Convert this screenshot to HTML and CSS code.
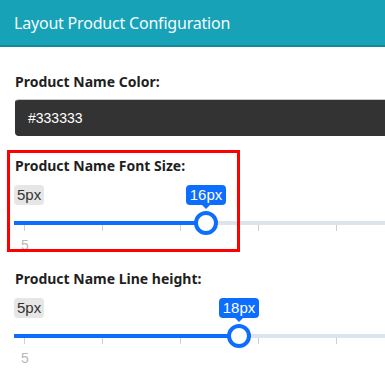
FILE: index.html
```html
<!DOCTYPE html>
<html lang="en">
<head>
    <meta charset="UTF-8">
    <meta name="viewport" content="width=device-width, initial-scale=1.0">
    <title>Layout Product Configuration</title>
    <link rel="stylesheet" href="styles.css">
</head>
<body>
    <header class="panel-header">
        <h1>Layout Product Configuration</h1>
    </header>

    <main class="panel-body">
        <div class="field">
            <label class="field-label">Product Name Color:</label>
            <div class="color-input">#333333</div>
        </div>

        <div class="field field-highlight">
            <label class="field-label">Product Name Font Size:</label>
            <div class="range">
                <div class="range-labels">
                    <span class="range-min">5px</span>
                    <span class="range-value" style="left: 172px;">16px</span>
                </div>
                <div class="range-track">
                    <div class="range-fill" style="width: 192px;"></div>
                    <div class="range-thumb" style="left: 192px;"></div>
                </div>
                <div class="range-grid">
                    <span class="tick"><em>5</em></span>
                    <span class="tick"></span>
                    <span class="tick"></span>
                    <span class="tick"></span>
                    <span class="tick"></span>
                </div>
            </div>
            <div class="highlight-box"></div>
        </div>

        <div class="field">
            <label class="field-label">Product Name Line height:</label>
            <div class="range">
                <div class="range-labels">
                    <span class="range-min">5px</span>
                    <span class="range-value" style="left: 205px;">18px</span>
                </div>
                <div class="range-track">
                    <div class="range-fill" style="width: 225px;"></div>
                    <div class="range-thumb" style="left: 225px;"></div>
                </div>
                <div class="range-grid">
                    <span class="tick"><em>5</em></span>
                    <span class="tick"></span>
                    <span class="tick"></span>
                    <span class="tick"></span>
                    <span class="tick"></span>
                </div>
            </div>
        </div>
    </main>
</body>
</html>
```

FILE: styles.css
```css
html, body {
    height: 100%;
    overflow: hidden;
}

body {
    margin: 0;
    background: #fff;
    font-family: "Noto Sans", Arial, sans-serif;
    color: #222;
}

.panel-header {
    height: 45px;
    background-color: #17a2b8;
    border-bottom: 2px solid #128a9c;
    padding-left: 14px;
    display: flex;
    align-items: center;
}

.panel-header h1 {
    margin: 0;
    font-size: 16px;
    font-weight: 400;
    color: #f4fbfc;
    letter-spacing: -0.2px;
}

.panel-body {
    padding: 25px 0 0 15px;
    overflow: hidden;
}

.field {
    position: relative;
    margin-bottom: 20px;
}

.field-label {
    display: block;
    height: 20px;
    line-height: 20px;
    font-size: 14px;
    font-weight: 700;
    color: #1f1f1f;
    margin-bottom: 7px;
}

.color-input {
    height: 35px;
    line-height: 36px;
    margin-right: -10px;
    background: #333;
    border: 1px solid #333;
    border-top-color: #c8c8c8;
    border-radius: 4px 0 0 4px;
    padding-left: 12px;
    font-family: "Liberation Sans", Arial, sans-serif;
    font-size: 14px;
    color: #fff;
}

.range {
    margin-left: -1px;
    margin-right: -10px;
    height: 64px;
    margin-top: 9px;
}

.range-labels {
    position: relative;
    height: 20px;
    font-family: "Liberation Sans", Arial, sans-serif;
    font-size: 15px;
}

.range-min {
    display: inline-block;
    height: 20px;
    line-height: 20px;
    padding: 0 3px;
    background: #e6e6e6;
    color: #333;
    border-radius: 4px;
}

.range-value {
    position: absolute;
    top: 0;
    width: 40px;
    height: 20px;
    line-height: 20px;
    text-align: center;
    background: #0d6efd;
    color: #fff;
    border-radius: 4px;
}

.range-value::after {
    content: "";
    position: absolute;
    left: 16px;
    bottom: -4px;
    border-left: 4px solid transparent;
    border-right: 4px solid transparent;
    border-top: 4px solid #0d6efd;
}

.range-track {
    position: relative;
    height: 4px;
    margin-top: 16px;
    background: #dee4ec;
}

.range-fill {
    height: 4px;
    background: #0d6efd;
}

.range-thumb {
    position: absolute;
    top: -10px;
    width: 24px;
    height: 24px;
    margin-left: -12px;
    box-sizing: border-box;
    border: 4px solid #0d6efd;
    border-radius: 50%;
    background: #fff;
}

.range-grid {
    display: flex;
    padding-left: 10px;
}

.tick {
    position: relative;
    flex: 0 0 78px;
    box-sizing: border-box;
    height: 6px;
    border-left: 1px solid #d0d0d0;
}

.tick em {
    position: absolute;
    top: 12px;
    left: -4px;
    font-style: normal;
    font-family: "Liberation Sans", Arial, sans-serif;
    font-size: 14px;
    color: #b8b8b8;
}

.highlight-box {
    position: absolute;
    top: -6px;
    left: -8px;
    width: 227px;
    height: 96px;
    border: 3px solid #f00;
}
```
